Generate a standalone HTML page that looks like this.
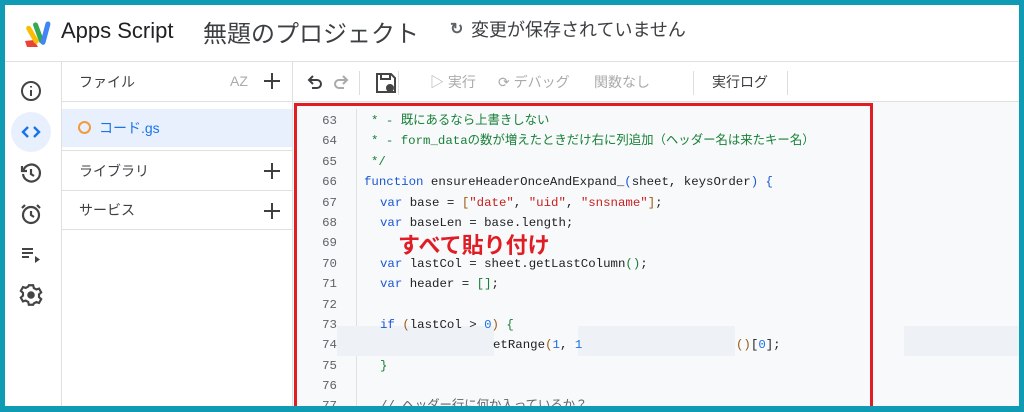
<!DOCTYPE html>
<html><head><meta charset="utf-8"><style>
*{margin:0;padding:0;box-sizing:border-box}
body{width:1024px;height:412px;overflow:hidden;background:#0e9bb3;font-family:"Liberation Sans","Noto Sans CJK JP",sans-serif;position:relative}
.a{position:absolute}
#main{left:5px;top:5px;width:1014px;height:401px;background:#fff;overflow:hidden}
.jp{font-family:"Liberation Sans","Noto Sans CJK JP",sans-serif}
.code{font-family:"Liberation Mono","Noto Sans CJK JP",monospace;font-size:12.4px;color:#202124}
.code span{white-space:pre}
.row{height:20.4px;position:relative;line-height:20.4px}
.ln{color:#5f6368;width:30px;text-align:right}
.cm{color:#188038}.kw{color:#1a57d6}.st{color:#c5221f}.br{color:#188038}.nm{color:#1a73e8}.pr{color:#9a5b14}
</style></head><body>
<div id="main" class="a">
<svg class="a" style="left:17px;top:12px" width="34" height="34" viewBox="0 0 34 34">
<path d="M3 24 L12 23 L16 30 L5 30 Z" fill="#ea4335"/>
<rect x="8" y="8" width="5" height="20" rx="2.5" transform="rotate(-30 10 18)" fill="#fbbc04"/>
<rect x="14" y="5" width="5" height="22" rx="2.5" transform="rotate(-20 16 16)" fill="#34a853"/>
<rect x="21" y="4" width="5" height="24" rx="2.5" transform="rotate(15 23 16)" fill="#4285f4"/>
</svg>
<div class="a" style="left:56px;top:13px;font-size:22px;color:#202124">Apps Script</div>
<div class="a jp" style="left:198px;top:9px;font-size:24px;color:#3c4043">無題のプロジェクト</div>
<div class="a" style="left:445px;top:14px;font-size:16px;color:#5f6368;font-weight:bold">↻</div>
<div class="a jp" style="left:466px;top:11px;font-size:18px;color:#3c4043">変更が保存されていません</div>
<div class="a" style="left:0;top:56px;width:1014px;height:1px;background:#e0e0e0"></div>
<!-- left rail -->
<div class="a" style="left:56px;top:57px;width:1px;height:350px;background:#e0e0e0"></div>
<div class="a" style="left:6px;top:107px;width:40px;height:40px;border-radius:50%;background:#e8f0fe"></div>
<svg class="a" style="left:14px;top:74px" width="24" height="24" viewBox="0 0 24 24" fill="none" stroke="#444" stroke-width="2"><circle cx="12" cy="12" r="9"/><path d="M12 11v6M12 7v1.5"/></svg>
<svg class="a" style="left:14px;top:115px" width="24" height="24" viewBox="0 0 24 24" fill="none" stroke="#1a73e8" stroke-width="2.4"><path d="M9 7l-5 5 5 5M15 7l5 5-5 5"/></svg>
<svg class="a" style="left:14px;top:156px" width="24" height="24" viewBox="0 0 24 24" fill="none" stroke="#444" stroke-width="2.2"><path d="M4.5 9A8.5 8.5 0 1 1 4 13"/><path d="M3 5v5h5"/><path d="M12 8v5l3 2"/></svg>
<svg class="a" style="left:14px;top:197px" width="24" height="24" viewBox="0 0 24 24" fill="none" stroke="#444" stroke-width="2.2"><circle cx="12" cy="13" r="8"/><path d="M12 9v4l3 2M3 6l3-3M21 6l-3-3"/></svg>
<svg class="a" style="left:14px;top:238px" width="24" height="24" viewBox="0 0 24 24"><path d="M3 6h11M3 10h11M3 14h7" stroke="#444" stroke-width="2"/><path d="M16 13l5 3.5-5 3.5z" fill="#444"/></svg>
<svg class="a" style="left:13px;top:277px" width="26" height="26" viewBox="0 0 24 24" fill="none" stroke="#444" stroke-width="2"><path d="M10 3h4l.6 2.6 2.3 1.3 2.5-.8 2 3.5-2 1.8v2.6l2 1.8-2 3.5-2.5-.8-2.3 1.3L14 21h-4l-.6-2.6-2.3-1.3-2.5.8-2-3.5 2-1.8v-2.6l-2-1.8 2-3.5 2.5.8 2.3-1.3z"/><circle cx="12" cy="12" r="2.5" fill="#444"/></svg>
<!-- file panel -->
<div class="a" style="left:287px;top:57px;width:1px;height:350px;background:#e0e0e0"></div>
<div class="a jp" style="left:74px;top:67px;font-size:14px;color:#3c4043">ファイル</div>
<div class="a" style="left:225px;top:68px;font-size:14px;color:#aaa">AZ</div>
<svg class="a" style="left:257px;top:66px" width="20" height="20"><path d="M10 2v16M2 10h16" stroke="#3c4043" stroke-width="2"/></svg>
<div class="a" style="left:57px;top:96px;width:230px;height:1px;background:#e0e0e0"></div>
<div class="a" style="left:57px;top:104px;width:230px;height:38px;background:#e8f0fe"></div>
<div class="a" style="left:73px;top:116px;width:13px;height:13px;border:2px solid #f29a3c;border-radius:50%"></div>
<div class="a jp" style="left:94px;top:113px;font-size:14px;color:#1a73e8">コード.gs</div>
<div class="a" style="left:57px;top:145px;width:230px;height:1px;background:#e0e0e0"></div>
<div class="a jp" style="left:74px;top:156px;font-size:14px;color:#3c4043">ライブラリ</div>
<svg class="a" style="left:257px;top:156px" width="20" height="20"><path d="M10 2v16M2 10h16" stroke="#3c4043" stroke-width="2"/></svg>
<div class="a" style="left:57px;top:185px;width:230px;height:1px;background:#e0e0e0"></div>
<div class="a jp" style="left:74px;top:195px;font-size:14px;color:#3c4043">サービス</div>
<svg class="a" style="left:257px;top:196px" width="20" height="20"><path d="M10 2v16M2 10h16" stroke="#3c4043" stroke-width="2"/></svg>
<div class="a" style="left:57px;top:224px;width:230px;height:1px;background:#e0e0e0"></div>
<!-- toolbar -->
<svg class="a" style="left:300px;top:67px" width="20" height="20" viewBox="0 0 20 20" fill="none" stroke="#3c4043" stroke-width="2"><path d="M5 8h7a4 4 0 0 1 0 8H7"/><path d="M8 4L4 8l4 4"/></svg>
<svg class="a" style="left:326px;top:67px" width="20" height="20" viewBox="0 0 20 20" fill="none" stroke="#aaa" stroke-width="2"><path d="M15 8H8a4 4 0 0 0 0 8h5"/><path d="M12 4l4 4-4 4"/></svg>
<div class="a" style="left:354px;top:66px;width:1px;height:24px;background:#ddd"></div>
<svg class="a" style="left:369px;top:66px" width="24" height="24" viewBox="0 0 24 24" fill="none" stroke="#444" stroke-width="2"><path d="M3 3h14l4 4v14H3z"/><path d="M7 3v5h9V3"/><circle cx="16" cy="17" r="3" fill="#444"/></svg>
<div class="a" style="left:393px;top:66px;width:1px;height:24px;background:#ddd"></div>
<div class="a jp" style="left:425px;top:67px;font-size:14px;color:#aaa">▷ 実行</div>
<div class="a jp" style="left:493px;top:67px;font-size:14px;color:#aaa">⟳ デバッグ</div>
<div class="a jp" style="left:589px;top:67px;font-size:14px;color:#aaa">関数なし</div>
<div class="a" style="left:688px;top:66px;width:1px;height:24px;background:#ddd"></div>
<div class="a jp" style="left:707px;top:67px;font-size:14px;color:#3c4043">実行ログ</div>
<div class="a" style="left:782px;top:66px;width:1px;height:24px;background:#ddd"></div>
<div class="a" style="left:288px;top:96px;width:726px;height:1px;background:#e0e0e0"></div>
<!-- editor -->
<div class="a" style="left:288px;top:97px;width:726px;height:310px;background:#f8f9fa"></div>
<div class="a" style="left:351px;top:104px;width:1px;height:310px;background:#e0e0e0"></div>
<div class="a" style="left:332px;top:321px;width:157px;height:30px;background:#eef2f6"></div>
<div class="a" style="left:573px;top:321px;width:157px;height:30px;background:#eef2f6"></div>
<div class="a" style="left:899px;top:321px;width:115px;height:30px;background:#eef2f6"></div>
<div class="a code" style="left:302px;top:106px;width:560px">
<div class="row"><span class="a ln">63</span><span class="a cm" style="left:64px">* - 既にあるなら上書きしない</span></div>
<div class="row"><span class="a ln">64</span><span class="a cm" style="left:64px">* - form_dataの数が増えたときだけ右に列追加（ヘッダー名は来たキー名）</span></div>
<div class="row"><span class="a ln">65</span><span class="a cm" style="left:64px">*/</span></div>
<div class="row"><span class="a ln">66</span><span class="a" style="left:57px"><span class="kw">function</span> ensureHeaderOnceAndExpand_<span class="kw">(</span>sheet, keysOrder<span class="kw">) {</span></span></div>
<div class="row"><span class="a ln">67</span><span class="a" style="left:73px"><span class="kw">var</span> base = <span class="pr">[</span><span class="st">"date"</span>, <span class="st">"uid"</span>, <span class="st">"snsname"</span><span class="pr">]</span>;</span></div>
<div class="row"><span class="a ln">68</span><span class="a" style="left:73px"><span class="kw">var</span> baseLen = base.length;</span></div>
<div class="row"><span class="a ln">69</span></div>
<div class="row"><span class="a ln">70</span><span class="a" style="left:73px"><span class="kw">var</span> lastCol = sheet.getLastColumn<span class="br">()</span>;</span></div>
<div class="row"><span class="a ln">71</span><span class="a" style="left:73px"><span class="kw">var</span> header = <span class="br">[]</span>;</span></div>
<div class="row"><span class="a ln">72</span></div>
<div class="row"><span class="a ln">73</span><span class="a" style="left:73px"><span class="kw">if</span> <span class="pr">(</span>lastCol &gt; <span class="nm">0</span><span class="pr">)</span> <span class="br">{</span></span></div>
<div class="row"><span class="a ln">74</span><span class="a" style="left:186px">etRange<span class="pr">(</span><span class="nm">1</span>, <span class="nm">1</span></span><span class="a" style="left:429px"><span class="pr">()</span>[<span class="nm">0</span>];</span></div>
<div class="row"><span class="a ln">75</span><span class="a br" style="left:73px">}</span></div>
<div class="row"><span class="a ln">76</span></div>
<div class="row"><span class="a ln">77</span><span class="a" style="left:73px;color:#5f6368">// ヘッダー行に何か入っているか？</span></div>
</div>
<div class="a jp" style="left:393px;top:223px;font-size:22px;font-weight:bold;color:#e01c24">すべて貼り付け</div>
<div class="a" style="left:289px;top:98px;width:579px;height:320px;border:3px solid #e01c24"></div>
</div>
</body></html>
